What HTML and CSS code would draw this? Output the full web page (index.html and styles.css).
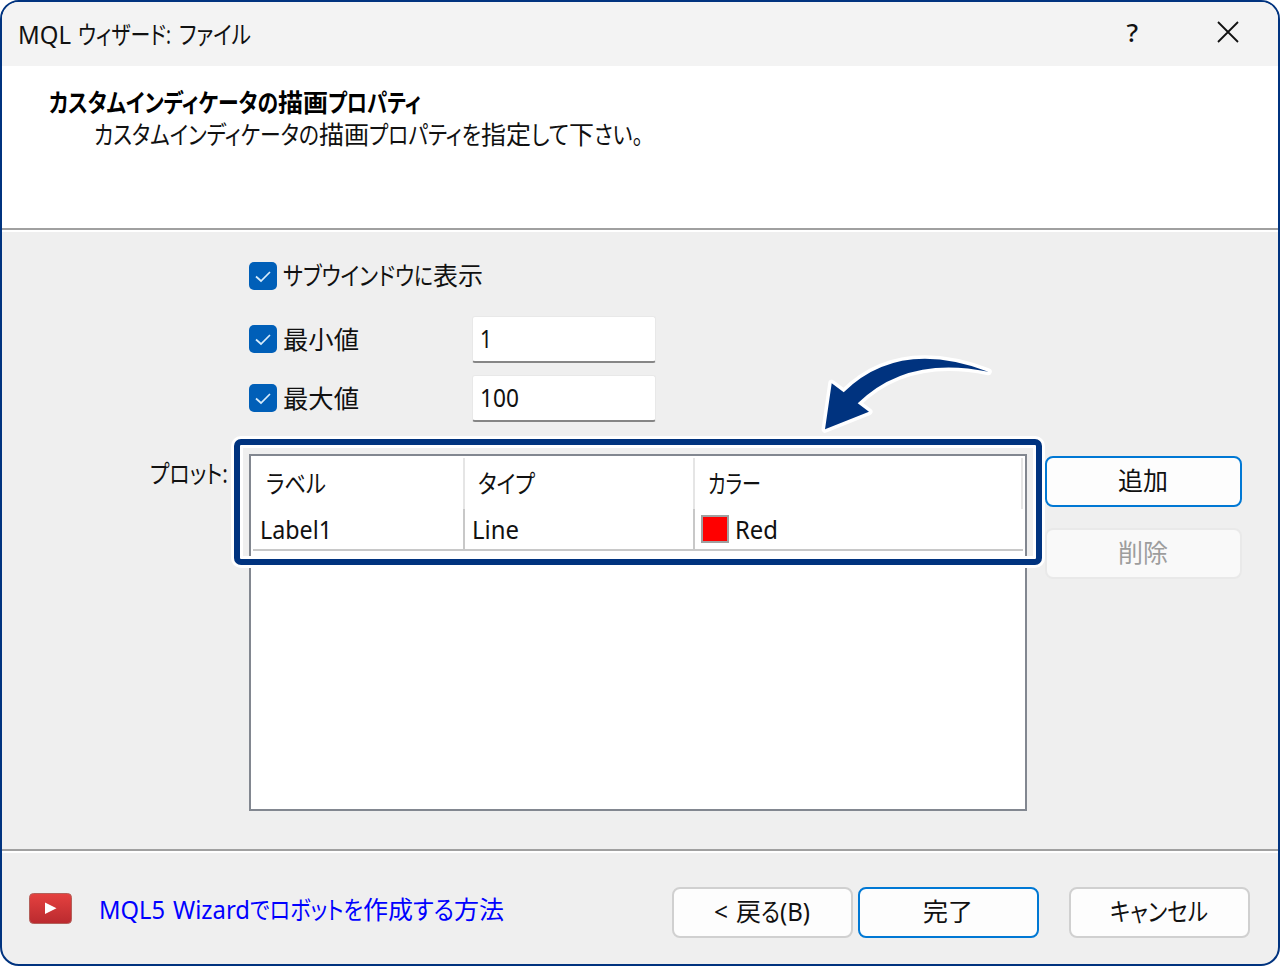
FILE: index.html
```
<!DOCTYPE html>
<html lang="ja">
<head>
    <meta charset="UTF-8">
    <meta name="viewport" content="width=device-width, initial-scale=1.0">
    <title>MQL ウィザード: ファイル</title>
    <link rel="stylesheet" href="styles.css">
</head>
<body>
    <div class="dialog">
        <div class="titlebar">
            <div class="title text"><span data-w="60" data-gap="7">MQL</span><span data-w="88">ウィザード</span><span data-w="13" data-gap="8">:</span><span data-w="72">ファイル</span></div>
            <div class="window-buttons">
                <span class="help">?</span>
                <svg class="close" viewBox="0 0 22 22">
                    <path d="M1 1 L21 21 M21 1 L1 21" fill="none" stroke="#111" stroke-width="1.8"></path>
                </svg>
            </div>
        </div>

        <div class="header">
            <div class="heading text"><span data-w="229">カスタムインディケータの</span><span data-w="50">描画</span><span data-w="93">プロパティ</span></div>
            <div class="subheading text"><span data-w="225">カスタムインディケータの</span><span data-w="50">描画</span><span data-w="112">プロパティを</span><span data-w="50">指定</span><span data-w="38">して</span><span data-w="25">下</span><span data-w="49">さい。</span></div>
        </div>

        <div class="content">
            <div class="options">
                <div class="option first">
                    <svg class="checkbox" viewBox="0 0 28 28"><rect width="28" height="28" rx="5"></rect><path d="M7 14.5 L12 19 L21 10"></path></svg>
                    <div class="label text"><span data-w="131">サブウインドウ</span><span data-w="19">に</span><span data-w="50">表示</span></div>
                </div>
                <div class="option">
                    <svg class="checkbox" viewBox="0 0 28 28"><rect width="28" height="28" rx="5"></rect><path d="M7 14.5 L12 19 L21 10"></path></svg>
                    <div class="label text"><span data-w="76">最小値</span></div>
                    <div class="input text"><span data-w="12">1</span></div>
                </div>
                <div class="option">
                    <svg class="checkbox" viewBox="0 0 28 28"><rect width="28" height="28" rx="5"></rect><path d="M7 14.5 L12 19 L21 10"></path></svg>
                    <div class="label text"><span data-w="76">最大値</span></div>
                    <div class="input text"><span data-w="39">100</span></div>
                </div>
            </div>

            <div class="plots">
                <div class="plots-label text"><span data-w="78">プロット:</span></div>
                <div class="plot-list">
                    <div class="row head">
                        <div class="cell text"><span data-w="60">ラベル</span></div>
                        <div class="cell text"><span data-w="57">タイプ</span></div>
                        <div class="cell text"><span data-w="53">カラー</span></div>
                    </div>
                    <div class="row">
                        <div class="cell text"><span data-w="72">Label1</span></div>
                        <div class="cell text"><span data-w="47">Line</span></div>
                        <div class="cell text"><i class="swatch"></i><span data-w="43">Red</span></div>
                    </div>
                    <div class="highlight"></div>
                    <svg class="arrow" viewBox="0 0 180 90">
                        <path d="M10 79.3 L16.7 33.3 L28.7 42.3 Q84 -12 173.3 21.7 Q92 5 42.7 53.3 L54 61.7 Z"></path>
                    </svg>
                </div>
                <div class="plot-buttons">
                    <div class="button default text"><span data-w="50">追加</span></div>
                    <div class="button disabled text"><span data-w="50">削除</span></div>
                </div>
            </div>
        </div>

        <div class="footer">
            <svg class="video-icon" viewBox="0 0 43 31">
                <defs>
                    <linearGradient id="red" x1="0" y1="0" x2="0" y2="1">
                        <stop offset="0" stop-color="#e5413f"></stop>
                        <stop offset="1" stop-color="#ba2a2f"></stop>
                    </linearGradient>
                </defs>
                <rect x="0.5" y="0.5" width="42" height="30" rx="4" fill="url(#red)" stroke="#b3605a"></rect>
                <path d="M16 9.5 L27.5 15.2 L16 21 Z" fill="#fff"></path>
            </svg>
            <div class="link text"><span data-w="74" data-gap="8">MQL5</span><span data-w="77">Wizard</span><span data-w="113">でロボットを</span><span data-w="50">作成</span><span data-w="41">する</span><span data-w="50">方法</span></div>
            <div class="footer-buttons">
                <div class="button text"><span data-w="22" data-gap="8">&lt;</span><span data-w="25">戻</span><span data-w="19">る</span><span data-w="30">(B)</span></div>
                <div class="button default text"><span data-w="50">完了</span></div>
                <div class="button cancel text"><span data-w="98">キャンセル</span></div>
            </div>
        </div>
    </div>

    <script>
        // Squeeze each run of text to its own width, the way the narrow UI font does
        document.querySelectorAll('.text span').forEach(run => {
            const width = Number(run.dataset.w);
            const gap = Number(run.dataset.gap || 0);
            const scale = (width - gap) / run.getBoundingClientRect().width;
            run.style.width = `${width}px`;
            run.style.transform = `scaleX(${scale})`;
        });
    </script>
</body>
</html>
```
FILE: styles.css
```
* {
    box-sizing: border-box;
}

body {
    margin: 0;
    background-color: white;
    font-family: "Noto Sans", "Noto Sans CJK JP", sans-serif;
    font-size: 25px;
    color: #111;
}

.dialog {
    display: flex;
    flex-direction: column;
    width: 1280px;
    height: 966px;
    border: 2px solid #00337f;
    border-radius: 19px;
    background-color: #efefef;
    overflow: hidden;
}

.text {
    display: flex;
    line-height: 32px;
    white-space: nowrap;
    font-feature-settings: "palt";
}

.text span {
    flex: none;
    display: block;
    transform-origin: left center;
}

.titlebar {
    display: flex;
    justify-content: space-between;
    height: 64px;
    padding: 16px 39px 0 16px;
    background-color: #f3f3f3;
}

.window-buttons {
    display: flex;
    gap: 79px;
}

.help {
    font-size: 26px;
    font-weight: 500;
    line-height: 28px;
}

.close {
    width: 22px;
    height: 22px;
    margin-top: 3px;
}

.header {
    height: 164px;
    padding: 20px 47px;
    background-color: white;
    border-bottom: 2px solid #a0a0a0;
}

.heading {
    font-weight: 600;
    color: black;
}

.subheading {
    padding-left: 45px;
}

.content {
    height: 621px;
    border-top: 2px solid white;
    border-bottom: 2px solid #a0a0a0;
}

.options {
    padding: 28px 0 0 247px;
}

.option {
    display: flex;
    align-items: center;
    height: 47px;
    margin-bottom: 12px;
}

.option.first {
    height: 32px;
    margin-bottom: 24px;
}

.checkbox {
    width: 28px;
    height: 28px;
    margin: 0 6px 1px 0;
}

.checkbox rect {
    fill: #005fb8;
}

.checkbox path {
    fill: none;
    stroke: #d8ecfb;
    stroke-width: 1.7;
}

.label {
    width: 189px;
    padding-bottom: 2px;
}

.input {
    width: 184px;
    height: 47px;
    padding: 5px 7px;
    background-color: white;
    border: 1px solid #e8e8e8;
    border-bottom: 2px solid #868686;
    border-radius: 3px;
}

.plots {
    display: flex;
    margin-top: 32px;
    padding-left: 148px;
}

.plots-label {
    width: 99px;
    padding-top: 3px;
}

.plot-list {
    position: relative;
    width: 778px;
    height: 357px;
    padding: 2px;
    background-color: white;
    border: 2px solid #828790;
}

.row {
    display: grid;
    grid-template-columns: 212px 230px 1fr;
    height: 42px;
    border-bottom: 2px solid #c8c8c8;
}

.row.head {
    height: 51px;
    border-bottom: none;
}

.cell {
    padding: 4px 0 0 7px;
    border-right: 2px solid #c8c8c8;
}

.cell:last-child {
    border-right: none;
}

.head .cell {
    padding: 9px 0 0 13px;
    border-right: 2px solid #e5e5e5;
}

.swatch {
    width: 28px;
    height: 28px;
    margin: 2px 6px 0 -1px;
    background-color: #ff0000;
    border: 2px solid #a0a0a0;
}

/* Frame around the rows, drawn over the list */
.highlight {
    position: absolute;
    left: -17px;
    top: -17px;
    width: 808px;
    height: 126px;
    border: 6px solid #00337f;
    border-radius: 7px;
    box-shadow: 0 0 0 3px white, inset 0 0 0 3px white;
}

.arrow {
    position: absolute;
    left: 564px;
    top: -106px;
    width: 180px;
    height: 90px;
    overflow: visible;
}

.arrow path {
    fill: #00337f;
    stroke: white;
    stroke-width: 7;
    stroke-linejoin: round;
    paint-order: stroke;
}

.plot-buttons {
    display: flex;
    flex-direction: column;
    gap: 21px;
    margin: 2px 0 0 18px;
}

.button {
    justify-content: center;
    width: 181px;
    height: 51px;
    padding: 6px 2px 0 0;
    background-color: #fdfdfd;
    border: 2px solid #d0d0d0;
    border-radius: 8px;
}

.plot-buttons .button {
    width: 197px;
}

.button.default {
    border-color: #0078d4;
}

.button.disabled {
    color: #9d9d9d;
    background-color: #f9f9f9;
    border-color: #e9e9e9;
}

.footer {
    display: flex;
    flex: 1;
    padding: 34px 28px 0 27px;
    border-top: 2px solid white;
}

.video-icon {
    width: 43px;
    height: 31px;
    margin-top: 6px;
}

.link {
    margin: 6px 0 0 27px;
    color: #0000ff;
}

.footer-buttons {
    display: flex;
    gap: 5px;
    margin-left: auto;
}

.cancel {
    margin-left: 25px;
}
```
